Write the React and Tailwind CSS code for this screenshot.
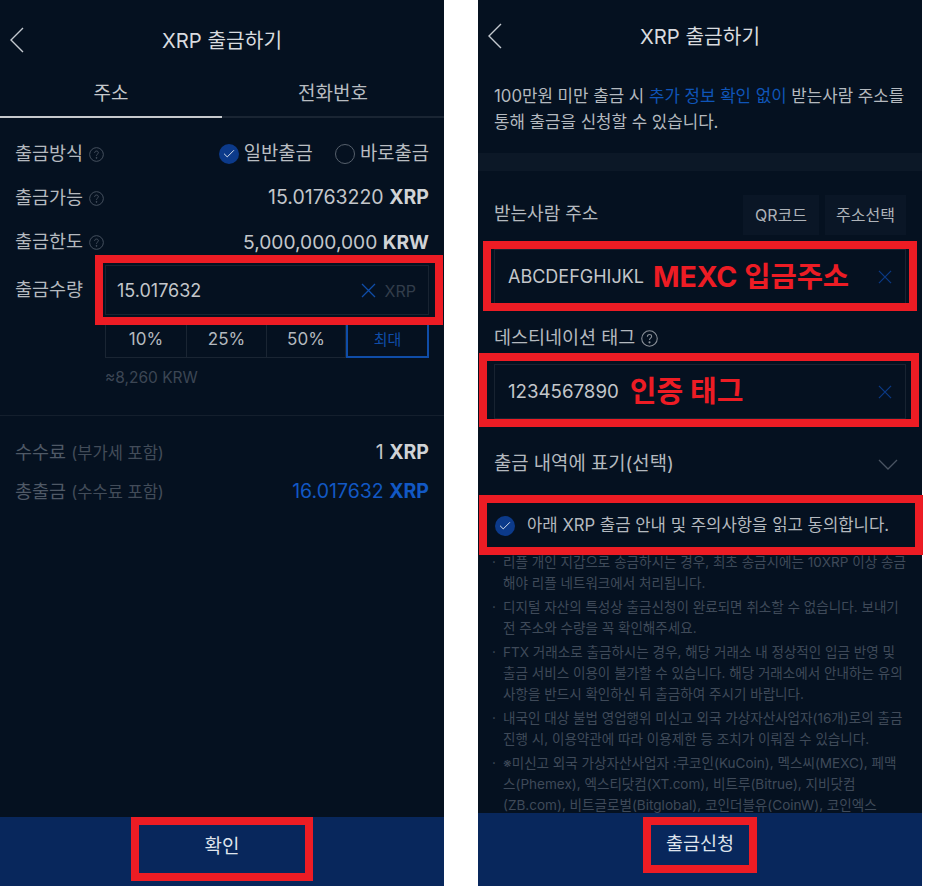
import React from "react";
import { Check } from "lucide-react";

const fontStack = { fontFamily: "'Inter', 'Noto Sans CJK KR', sans-serif" };

const notices = [
  ["리플 개인 지갑으로 송금하시는 경우, 최초 송금시에는 10XRP 이상 송금", "해야 리플 네트워크에서 처리됩니다."],
  ["디지털 자산의 특성상 출금신청이 완료되면 취소할 수 없습니다. 보내기", "전 주소와 수량을 꼭 확인해주세요."],
  [
    "FTX 거래소로 출금하시는 경우, 해당 거래소 내 정상적인 입금 반영 및",
    "출금 서비스 이용이 불가할 수 있습니다. 해당 거래소에서 안내하는 유의",
    "사항을 반드시 확인하신 뒤 출금하여 주시기 바랍니다.",
  ],
  ["내국인 대상 불법 영업행위 미신고 외국 가상자산사업자(16개)로의 출금", "진행 시, 이용약관에 따라 이용제한 등 조치가 이뤄질 수 있습니다."],
  [
    "※미신고 외국 가상자산사업자 :쿠코인(KuCoin), 멕스씨(MEXC), 페맥",
    "스(Phemex), 엑스티닷컴(XT.com), 비트루(Bitrue), 지비닷컴",
    "(ZB.com), 비트글로벌(Bitglobal), 코인더블유(CoinW), 코인엑스",
  ],
];

const BackIcon = () => (
  <svg width="16" height="26" viewBox="0 0 16 26" fill="none" stroke="#c4c9cf" strokeWidth="1.4">
    <polyline points="14,1 2,13 14,25" />
  </svg>
);

const HelpIcon = ({ size = 15, color = "#4a5462" }) => (
  <svg width={size} height={size} viewBox="0 0 16 16" fill="none" stroke={color} strokeWidth="1">
    <circle cx="8" cy="8" r="7.3" />
    <path d="M6 6.3c0-1.2.9-2 2-2s2 .8 2 1.8c0 1.5-2 1.5-2 3.2" />
    <circle cx="8" cy="11.6" r="0.5" fill={color} />
  </svg>
);

const ClearIcon = ({ size = 15, color = "#0f4da8" }) => (
  <svg width={size} height={size} viewBox="0 0 15 15" fill="none" stroke={color} strokeWidth="1.3">
    <path d="M1 1l13 13M14 1L1 14" />
  </svg>
);

const CheckCircle = ({ size = 20 }) => (
  <span
    className="flex items-center justify-center rounded-full bg-[#0c3a8a] shrink-0"
    style={{ width: size, height: size }}
  >
    <Check size={size - 6} color="#e4e9f2" strokeWidth={1.6} />
  </span>
);

const RedBox = ({ className }) => <div className={`absolute border-[8px] border-[#ed1c24] ${className}`} />;

const InfoRow = ({ label, children }) => (
  <div className="flex h-[44px] items-center justify-between pt-[2px]">
    <div className="flex items-center gap-[6px] text-[18.5px] text-[#b4b9bf]">
      {label}
      <HelpIcon />
    </div>
    {children}
  </div>
);

const LeftPanel = () => (
  <div className="relative flex h-[886px] w-[444px] shrink-0 flex-col bg-[#051120]">
    <div className="relative flex h-[68px] items-center justify-center pt-[15px] text-[20.3px] text-[#d8dbdf]">
      <div className="absolute left-[9px] top-[27px]">
        <BackIcon />
      </div>
      XRP 출금하기
    </div>

    <div className="flex h-[50px] text-[19px]">
      <div className="flex w-[222px] items-center justify-center border-b-[2px] border-[#c6c9cc] pt-[4px] text-[#c6c9cc]">주소</div>
      <div className="flex w-[222px] items-center justify-center border-b-[2px] border-[#1a2533] pt-[4px] text-[#b8bcc1]">전화번호</div>
    </div>

    <div className="px-[15px] pt-[13px]">
      <InfoRow label="출금방식">
        <div className="flex items-center text-[18.8px] text-[#b9bdc2]">
          <CheckCircle />
          <span className="ml-[5px]">일반출금</span>
          <span className="ml-[22px] h-[20px] w-[20px] rounded-full border border-[#56606c]" />
          <span className="ml-[5px]">바로출금</span>
        </div>
      </InfoRow>
      <InfoRow label="출금가능">
        <div className="text-[19.5px] text-[#c3c6ca]">
          15.01763220 <b className="text-[#d0d3d6]">XRP</b>
        </div>
      </InfoRow>
      <InfoRow label="출금한도">
        <div className="text-[19.2px] text-[#c3c6ca]">
          5,000,000,000 <b className="text-[#d0d3d6]">KRW</b>
        </div>
      </InfoRow>

      <div className="mt-[2px] flex">
        <div className="w-[91px] pt-[11px] text-[18.5px] text-[#b4b9bf]">출금수량</div>
        <div className="ml-[1px] w-[324px]">
          <div className="flex h-[50px] items-center justify-between border border-[#182331] pl-[11px] pr-[12px] pt-[1px]">
            <span className="text-[18px] text-[#c3c6ca]">15.017632</span>
            <div className="flex items-center gap-[9px]">
              <ClearIcon />
              <span className="text-[16px] text-[#323d4b]">XRP</span>
            </div>
          </div>
          <div className="mt-[7px] flex h-[36px] text-[17px] text-[#b4b9bf]">
            <div className="flex w-[81px] items-center justify-center border-b border-l border-[#1a2533]">10%</div>
            <div className="flex w-[80px] items-center justify-center border-b border-l border-[#1a2533]">25%</div>
            <div className="flex w-[80px] items-center justify-center border-x border-b border-[#1a2533]">50%</div>
            <div className="flex w-[83px] items-center justify-center border-[2px] border-[#0f4da8] text-[15px] text-[#0f4da8]">최대</div>
          </div>
          <div className="mt-[10px] text-[15.5px] leading-[20px] text-[#3c4654]">≈8,260 KRW</div>
        </div>
      </div>
    </div>

    <div className="mt-[27px] border-t border-[#141f2d] px-[15px] pt-[17px]">
      <div className="flex h-[39px] items-center justify-between">
        <div className="text-[18.5px] text-[#4f5966]">
          수수료 <span className="text-[16.5px] text-[#424c59]">(부가세 포함)</span>
        </div>
        <div className="text-[19.5px] text-[#c3c6ca]">
          1 <b className="text-[#d0d3d6]">XRP</b>
        </div>
      </div>
      <div className="flex h-[39px] items-center justify-between">
        <div className="text-[18.5px] text-[#4f5966]">
          총출금 <span className="text-[16.5px] text-[#424c59]">(수수료 포함)</span>
        </div>
        <div className="text-[19.5px] text-[#1258c4]">
          16.017632 <b>XRP</b>
        </div>
      </div>
    </div>

    <div className="mt-auto flex h-[69px] items-center justify-center bg-[#08275c] pb-[8px] text-[19px] text-[#dfe4ec]">확인</div>

    <RedBox className="left-[95px] top-[255px] h-[70px] w-[348px]" />
    <RedBox className="left-[131px] top-[817px] h-[64px] w-[182px]" />
  </div>
);

const RightPanel = () => (
  <div className="relative flex h-[886px] w-[444px] shrink-0 flex-col bg-[#051120]">
    <div className="relative flex h-[72px] items-center justify-center pt-[2px] text-[20.3px] text-[#d8dbdf]">
      <div className="absolute left-[9px] top-[23px]">
        <BackIcon />
      </div>
      XRP 출금하기
    </div>

    <div className="h-[81px] whitespace-nowrap px-[16px] pt-[11px] text-[16.8px] leading-[26px] text-[#b4b9bf]">
      <div>
        100만원 미만 출금 시 <span className="text-[#0f55b8]">추가 정보 확인 없이</span> 받는사람 주소를
      </div>
      <div>통해 출금을 신청할 수 있습니다.</div>
    </div>
    <div className="h-[18px] bg-[#0c1827]" />

    <div className="flex h-[78px] items-start justify-between pl-[16px] pr-[16px] pt-[24px]">
      <div className="pt-[5px] text-[18px] text-[#b4b9bf]">받는사람 주소</div>
      <div className="flex gap-[6px] text-[16px] text-[#aeb3b9]">
        <div className="flex h-[40px] w-[76px] items-center justify-center bg-[#0a1626]">QR코드</div>
        <div className="flex h-[40px] w-[81px] items-center justify-center bg-[#0a1626]">주소선택</div>
      </div>
    </div>

    <div className="mx-[16px] flex h-[55px] items-center justify-between border border-[#182331] pl-[13px] pr-[13px]">
      <div className="flex items-center whitespace-nowrap">
        <span className="text-[18px] text-[#c3c6ca]">ABCDEFGHIJKL</span>
        <b className="ml-[9px] text-[28.5px] leading-[34px] text-[#ed1c24]">MEXC 입금주소</b>
      </div>
      <ClearIcon size={14} color="#0b3a85" />
    </div>

    <div className="flex h-[60px] items-center gap-[6px] px-[16px] pt-[8px] text-[18.5px] text-[#b4b9bf]">
      데스티네이션 태그
      <HelpIcon size={17} color="#8a9098" />
    </div>

    <div className="mx-[16px] flex h-[55px] items-center justify-between border border-[#182331] pl-[13px] pr-[13px]">
      <div className="flex items-center whitespace-nowrap">
        <span className="pt-[1px] text-[18.7px] text-[#c3c6ca]">1234567890</span>
        <b className="ml-[11px] text-[29px] leading-[34px] text-[#ed1c24]">인증 태그</b>
      </div>
      <ClearIcon size={14} color="#0b3a85" />
    </div>

    <div className="flex h-[97px] items-center justify-between pb-[7px] pl-[16px] pr-[24px] text-[18.8px] text-[#b4b9bf]">
      출금 내역에 표기(선택)
      <svg width="20" height="11" viewBox="0 0 20 11" fill="none" stroke="#4a5462" strokeWidth="1.3">
        <polyline points="1,1 10,10 19,1" />
      </svg>
    </div>

    <div className="flex h-[20px] items-center gap-[12px] whitespace-nowrap pl-[17px] text-[16.7px] text-[#b4b9bf]">
      <CheckCircle />
      아래 XRP 출금 안내 및 주의사항을 읽고 동의합니다.
    </div>

    <div className="mt-[16px] min-h-0 flex-1 overflow-hidden pl-[14px] text-[13.55px] leading-[21px] text-[#3f4a59]">
      {notices.map((lines, i) => (
        <div key={i} className="mb-[3px] flex">
          <span className="w-[11px] shrink-0">·</span>
          <div>
            {lines.map((line) => (
              <div key={line} className="whitespace-nowrap">
                {line}
              </div>
            ))}
          </div>
        </div>
      ))}
    </div>

    <div className="flex h-[73px] shrink-0 items-center justify-center bg-[#08275c] pb-[11px] text-[18.5px] text-[#dfe4ec]">출금신청</div>

    <RedBox className="left-[5px] top-[241px] h-[70px] w-[434px]" />
    <RedBox className="left-[1px] top-[353px] h-[74px] w-[440px]" />
    <RedBox className="left-[1px] top-[495px] h-[60px] w-[444px]" />
    <RedBox className="left-[165px] top-[817px] h-[56px] w-[114px]" />
  </div>
);

export default function App() {
  return (
    <div className="flex h-[886px] w-[934px] gap-[34px] overflow-hidden bg-white" style={fontStack}>
      <LeftPanel />
      <RightPanel />
    </div>
  );
}
